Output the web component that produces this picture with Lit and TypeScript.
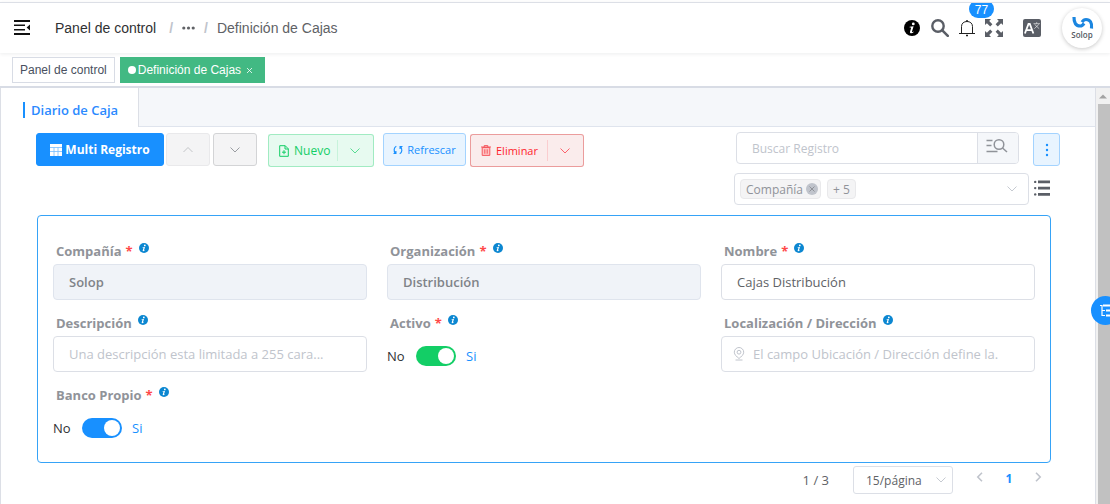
import { LitElement, html, css, svg, nothing } from "lit";
import { customElement, property } from "lit/decorators.js";

const chevronDown = html`<svg class="chevron" viewBox="0 0 12 12" width="12" height="12" aria-hidden="true"><path d="M1.5 3.5 6 8l4.500-4.500" fill="none" stroke="currentColor" stroke-width=".9"/></svg>`;
const chevronUp = html`<svg class="chevron" viewBox="0 0 12 12" width="12" height="12" aria-hidden="true"><path d="M1.5 8 6 3.500 10.500 8" fill="none" stroke="currentColor" stroke-width=".9"/></svg>`;

const infoGlyph = svg`<circle cx="8" cy="8" r="8" fill="currentColor"/><circle cx="9.3" cy="3.9" r="1.4" fill="#fff"/><path d="M5.6 6.8 9.6 6.2 8 11.4c-.2.7.2.9 1.3 0l.4.5c-1.6 1.8-4.2 1.7-3.7-.2l1.1-3.7c.1-.5-.3-.6-1.4-.6z" fill="#fff"/>`;

@customElement("nav-bar")
export class NavBar extends LitElement {
  static styles = css`
    :host { display: block; font-family: "Liberation Sans", Arial, sans-serif; font-size: 14px; }
    .bar { display: flex; align-items: center; height: 50px; padding: 0 8px 0 14px; border-top: 1px solid #dcdfe6; box-shadow: 0 1px 4px rgba(0, 21, 41, .08); overflow: clip; }
    button { border: 0; padding: 0; background: none; display: block; color: #5a5e66; cursor: pointer; }
    svg { display: block; }
    .crumbs { display: flex; align-items: center; gap: 9px; margin-left: 25px; flex: 1; color: #606266; white-space: nowrap; }
    .crumbs a { color: #303133; text-decoration: none; margin-right: 4px; }
    .sep { color: #c0c4cc; font-weight: 700; }
    .tools { display: flex; align-items: center; }
    .black { color: #000; }
    .search { margin-left: 11px; }
    .bell { margin-left: 10px; position: relative; color: #222; }
    .badge { position: absolute; left: 10px; top: -19px; box-sizing: border-box; width: 25px; height: 18px; border-radius: 9px; background: #1890ff; color: #fff; font-size: 12px; line-height: 20px; text-align: center; }
    .expand { margin-left: 10px; }
    .lang { margin-left: 20px; }
    .avatar { margin-left: 21px; width: 40px; height: 40px; border-radius: 50%; background: #fff; box-shadow: 0 1px 4px rgba(0, 0, 0, .22); }
  `;
  render() {
    return html`
      <header class="bar">
        <button aria-label="Menú"><svg width="16" height="16" viewBox="0 0 16 16" fill="#111"><path d="M0 0h16v2H0zM0 4.500h11v1.500H0zM0 9h11v1.500H0zM0 13h16v2H0zM16 4.500v6L12.600 7.500z"/></svg></button>
        <nav class="crumbs">
          <a href="#">Panel de control</a><span class="sep">/</span>
          <svg width="13" height="14" viewBox="0 0 13 14" fill="#606266"><circle cx="1.8" cy="7" r="1.6"/><circle cx="6.5" cy="7" r="1.6"/><circle cx="11.2" cy="7" r="1.6"/></svg>
          <span class="sep">/</span><span>Definición de Cajas</span>
        </nav>
        <div class="tools">
          <button class="black" aria-label="Información"><svg width="16" height="16" viewBox="0 0 16 16">${infoGlyph}</svg></button>
          <button class="search" aria-label="Buscar"><svg width="18" height="18" viewBox="0 0 18 18" fill="none" stroke="currentColor"><circle cx="7" cy="7" r="5.7" stroke-width="2.4"/><path d="m11.3 11.3 5.500 5.500" stroke-width="2.600" stroke-linecap="round"/></svg></button>
          <button class="bell" aria-label="Notificaciones"><svg width="16" height="18" viewBox="0 0 16 18" fill="none" stroke="currentColor" stroke-width="1"><path d="M0 14.500h16M2.500 14.500V7.500C2.500 4.200 5 2.500 8 2.500s5.500 1.700 5.500 5v7"/><path d="M8 1v1.500M7 16.500h2" stroke-width="1.500"/></svg><span class="badge">77</span></button>
          <button class="expand" aria-label="Pantalla completa"><svg width="18" height="18" viewBox="0 0 18 18" fill="currentColor"><path d="M0 0h6L4.200 1.900 7.400 5.200 5.200 7.400 1.900 4.200 0 6zM18 0h-6l1.800 1.900-3.200 3.300 2.200 2.200 3.300-3.200L18 6zM0 18h6l-1.800-1.900 3.200-3.300-2.200-2.200-3.300 3.200L0 12zM18 18h-6l1.800-1.900-3.200-3.300 2.200-2.200 3.300 3.200L18 12z"/></svg></button>
          <button class="lang" aria-label="Idioma"><svg width="18" height="18" viewBox="0 0 18 18"><rect width="18" height="18" rx="2" fill="currentColor"/><path d="M1.900 14.500 5.500 5h1.300l3.600 9.500M3.400 11.200h5.500" fill="none" stroke="#fff" stroke-width="1.800"/><path d="M10.500 4.700h6.500M13.700 3.200v1.500M11.600 5.400l4.600 4.300M15.900 5.400 11.300 9.700" fill="none" stroke="#fff" stroke-width=".6"/></svg></button>
          <button class="avatar" aria-label="Solop"><svg width="40" height="40" viewBox="0 0 40 40"><g fill="none" stroke="#1b86e0" stroke-width="3.200"><path d="M12 9c-.2 6 2 9 6.200 9 2 0 3-1.300 3.800-2.600"/><path d="M29.500 20.500c.8-6-1.500-9-5.500-9-2.200 0-3.200 1.300-4 2.600"/></g><text x="20" y="30" text-anchor="middle" font-family="Open Sans, sans-serif" font-size="8" font-weight="600" fill="#555a61">Solop</text></svg></button>
        </div>
      </header>`;
  }
}

@customElement("tags-view")
export class TagsView extends LitElement {
  static styles = css`
    :host { display: block; font: 12px "Liberation Sans", Arial, sans-serif; }
    .tags { display: flex; gap: 5px; padding: 4px 12px 3px; border-bottom: 2px solid #d8dce5; }
    .tag { display: flex; align-items: center; box-sizing: border-box; height: 26px; padding: 0 7px; border: 1px solid #d8dce5; color: #495060; background: #fff; text-decoration: none; }
    .tag.active { background: #42b983; border-color: #42b983; color: #fff; }
    .dot { width: 8px; height: 8px; border-radius: 50%; background: #fff; margin-right: 2px; }
    .close { width: 16px; height: 16px; display: grid; place-items: center; }
  `;
  render() {
    return html`<nav class="tags">
      <a class="tag" href="#">Panel de control</a>
      <a class="tag active" href="#"><span class="dot"></span>Definición de Cajas<span class="close"><svg width="5" height="5" viewBox="0 0 5 5"><path d="m0 0 5 5M5 0 0 5" stroke="#fff" stroke-width=".8"/></svg></span></a>
    </nav>`;
  }
}

@customElement("form-field")
export class FormField extends LitElement {
  @property() label = "";
  @property() value = "";
  @property() hint = "";
  @property() kind: "text" | "switch" | "location" = "text";
  @property() tone = "blue";
  @property({ type: Boolean }) required = false;
  @property({ type: Boolean }) locked = false;

  static styles = css`
    :host { display: block; min-width: 0; font: 13px "Open Sans", "Noto Sans", sans-serif; }
    .label { display: flex; height: 24px; line-height: 23px; padding-left: 3px; font-weight: 700; color: #909399; white-space: nowrap; }
    .star { color: #ff4949; margin-left: 4px; }
    .info { color: #0c87d1; margin: 3px 0 0 6px; }
    .box { display: flex; align-items: center; box-sizing: border-box; height: 36px; padding: 0 15px; border: 1px solid #dcdfe6; border-radius: 4px; background: #fff; color: #c0c4cc; }
    .box.locked { background: #f0f3f8; border-color: #dfe4ed; }
    .pin { margin: 0 8px 0 -4px; flex: none; }
    .box.location { padding-right: 30px; }
    input[type="text"] { flex: 1; min-width: 0; width: 0; border: 0; padding: 0; outline: 0; background: none; font: inherit; color: #606266; text-overflow: ellipsis; }
    .locked input[type="text"] { color: #808388; font-weight: 600; }
    .location input[type="text"] { text-overflow: clip; }
    input::placeholder { color: #c0c4cc; opacity: 1; }
    .switch { display: flex; align-items: center; gap: 10px; height: 40px; color: #303133; }
    .no { width: 19px; }
    .toggle { appearance: none; margin: 0; width: 40px; height: 20px; border-radius: 10px; background: #c0ccda; display: flex; align-items: center; padding: 0 2px; }
    .toggle::before { content: ""; width: 16px; height: 16px; border-radius: 50%; background: #fff; }
    .toggle:checked { justify-content: flex-end; background: #1890ff; }
    .toggle.green:checked { background: #13ce66; }
    .on { color: #1890ff; }
  `;

  private control() {
    if (this.kind === "switch") {
      return html`<div class="switch"><span class="no">No</span><input id="f" class="toggle ${this.tone}" type="checkbox" role="switch" checked><span class="on">Si</span></div>`;
    }
    return html`<div class="box ${this.locked ? "locked" : ""} ${this.kind}">
      ${this.kind === "location" ? html`<svg class="pin" width="12" height="14" viewBox="0 0 12 14" fill="none" stroke="currentColor"><path d="M6 11.500C3.500 9.500 1.300 7.600 1.300 5.200a4.700 4.700 0 0 1 9.400 0c0 2.400-2.200 4.300-4.700 6.300z"/><circle cx="6" cy="5.200" r="1.900"/><path d="M2.500 13h7"/></svg>` : nothing}
      <input id="f" type="text" .value=${this.value} placeholder=${this.hint} ?disabled=${this.locked}>
    </div>`;
  }

  render() {
    return html`<label class="label" for="f">${this.label}${this.required ? html`<span class="star">*</span>` : nothing}
      <svg class="info" width="10" height="10" viewBox="0 0 16 16">${infoGlyph}</svg></label>${this.control()}`;
  }
}

@customElement("record-toolbar")
export class RecordToolbar extends LitElement {
  static styles = css`
    :host { display: block; font: 12px "Open Sans", "Noto Sans", sans-serif; }
    svg { display: block; flex: none; }
    .row { display: flex; justify-content: space-between; align-items: flex-start; gap: 16px; }
    .actions { display: flex; padding-top: 1px; align-items: flex-start; }
    button { font: inherit; padding: 0; border: 1px solid; border-radius: 3px; box-sizing: border-box; display: flex; align-items: center; justify-content: center; height: 33px; white-space: nowrap; cursor: pointer; }
    .multi { width: 128px; gap: 3px; background: #1890ff; border-color: #1890ff; color: #fff; font-weight: 700; }
    .step { width: 44px; background: #f4f4f5; border-color: #d3d4d6; color: #909399; margin-left: 3px; }
    .step.off { border-color: #e9e9eb; color: #bcbec2; margin-left: 2px; }
    .split { display: flex; margin: 1px 0 0 11px; }
    .split button:first-child { border-right: 0; border-radius: 3px 0 0 3px; padding-left: 10px; gap: 5px; justify-content: flex-start; }
    .split button:last-child { border-left: 0; border-radius: 0 3px 3px 0; width: 36px; justify-content: flex-start; }
    .split button:last-child::before { content: ""; width: 1px; height: 21px; background: currentColor; opacity: .15; margin-right: 11px; }
    .split .chevron { opacity: .75; }
    .new button { background: #e7faf0; border-color: #a1ebc2; color: #13ce66; }
    .new button:first-child { width: 69px; }
    .new button:last-child { width: 37px; }
    .del { margin-left: 4px; }
    .del button { background: #faecec; border-color: #eb9c9c; color: #ff1f2d; }
    .del button:first-child { width: 77px; font-size: 11px; }
    .del button:last-child { width: 37px; }
    .refresh { width: 83px; gap: 4px; margin-left: 9px; font-size: 11px; background: #e8f4ff; border-color: #a3d3ff; color: #1890ff; }
    .side { display: grid; grid-template-columns: 295px 26px; column-gap: 5px; row-gap: 8px; align-items: start; flex: none; }
    .search { display: flex; margin: 0 10px 0 2px; height: 32px; box-sizing: border-box; border: 1px solid #dcdfe6; border-radius: 4px; }
    input { border: 0; outline: 0; padding: 0; background: none; font: inherit; min-width: 0; flex: 1; color: #606266; }
    .search input { padding-left: 15px; }
    .search input::placeholder { color: #c0c4cc; opacity: 1; }
    .search button { height: auto; width: 41px; border: 0; border-left: 1px solid #dcdfe6; border-radius: 0 3px 3px 0; background: #f5f7fa; color: #909399; padding: 0 2px 4px 0; }
    .more { width: 27px; margin: 1px 0 -1px -1px; background: #e8f4ff; border-color: #a3d3ff; color: #1890ff; }
    .pick { display: flex; align-items: center; gap: 6px; box-sizing: border-box; height: 32px; padding: 0 10px 0 5px; border: 1px solid #dcdfe6; border-radius: 4px; color: #c0c4cc; }
    .chip { display: flex; align-items: center; gap: 3px; box-sizing: border-box; height: 20px; padding: 0 5px; border: 1px solid #e9e9eb; border-radius: 4px; background: #f4f4f5; color: #909399; white-space: nowrap; }
    .chip.first { padding-right: 2px; }
    .chip button { width: 12px; height: 12px; border: 0; border-radius: 50%; background: #c0c4cc; color: #909399; }
    .list { width: 16px; border: 0; background: none; height: 30px; color: #5a5e66; }
  `;
  render() {
    return html`<div class="row">
      <div class="actions">
        <button class="multi"><svg width="12" height="12" viewBox="0 0 12 12"><path fill="#fff" d="M0 0h12v12H0z"/><path d="M0 3.500h12M0 7.500h12M4 3.500V12M8 3.500V12" stroke="#76bdff" stroke-width=".8"/></svg>Multi Registro</button>
        <button class="step off" aria-label="Anterior">${chevronUp}</button>
        <button class="step" aria-label="Siguiente">${chevronDown}</button>
        <div class="split new">
          <button><svg width="10" height="12" viewBox="0 0 10 12" fill="none" stroke="currentColor"><path d="M.7.700h5.500L9.300 3.800v7.500H.7zM6 .7V4h3.300M5 5.200v4M3 7.200h4" stroke-width="1"/></svg>Nuevo</button>
          <button aria-label="Más opciones de nuevo">${chevronDown}</button>
        </div>
        <button class="refresh"><svg width="10" height="10" viewBox="0 0 10 10" fill="none" stroke="currentColor" stroke-width="1.200"><path d="M3.300 1.200C.8 2.500.5 5.700 2.300 8.300M.5 8.500h2.400V6M6.700 8.800C9.200 7.500 9.500 4.300 7.700 1.700M9.500 1.500H7.100V4"/></svg>Refrescar</button>
        <div class="split del">
          <button><svg width="10" height="11" viewBox="0 0 10 11" fill="none" stroke="#f5585f" stroke-width="1"><path d="M1.200 2.500h7.600v7.900H1.200z" fill="#ffc4c4"/><path d="M0 2h10M3.200 2V.6h3.600V2M3.800 4.300v4.400M6.200 4.300v4.400"/></svg>Eliminar</button>
          <button aria-label="Más opciones de eliminar">${chevronDown}</button>
        </div>
      </div>
      <div class="side">
        <div class="search"><input type="search" aria-label="Buscar Registro" placeholder="Buscar Registro"><button aria-label="Búsqueda avanzada"><svg width="22" height="16" viewBox="0 0 22 16" fill="none" stroke="currentColor" stroke-width="1.500"><path d="M.5 2.500h6M.5 7.500h5M.5 13.500h11"/><circle cx="13" cy="6.500" r="4.800"/><path d="m16.500 10 4.500 4"/></svg></button></div>
        <button class="more" aria-label="Más acciones"><svg width="4" height="14" viewBox="0 0 4 14" fill="currentColor"><circle cx="2" cy="2" r="1.200"/><circle cx="2" cy="7" r="1.200"/><circle cx="2" cy="12" r="1.200"/></svg></button>
        <div class="pick"><span class="chip first">Compañía<button aria-label="Quitar Compañía"><svg width="6" height="6" viewBox="0 0 6 6"><path d="m.5.5 5 5m0-5-5 5" stroke="currentColor"/></svg></button></span><span class="chip">+ 5</span><input type="text" aria-label="Campos visibles">${chevronDown}</div>
        <button class="list" aria-label="Lista"><svg width="16" height="16" viewBox="0 0 16 16" fill="currentColor"><path d="M4 .500h12v2.800H4zM4 6.700h12v2.800H4zM4 13h12v2.800H4z"/><circle cx="1.200" cy="1.900" r="1.200"/><circle cx="1.200" cy="8.100" r="1.200"/><circle cx="1.200" cy="14.400" r="1.200"/></svg></button>
      </div>
    </div>`;
  }
}

@customElement("page-footer")
export class PageFooter extends LitElement {
  static styles = css`
    :host { display: block; font: 13px "Open Sans", "Noto Sans", sans-serif; color: #606266; }
    .pager { display: flex; justify-content: flex-end; align-items: flex-start; padding-right: 2px; }
    .count { line-height: 28px; margin-right: 24px; }
    .size { display: grid; align-items: center; margin-right: 16px; }
    .size > * { grid-area: 1 / 1; }
    .size svg { justify-self: end; margin-right: 6px; color: #c0c4cc; pointer-events: none; }
    select { appearance: none; box-sizing: border-box; width: 100px; height: 28px; border: 1px solid #dcdfe6; border-radius: 3px; padding: 0 20px 0 12px; font: inherit; font-size: 12px; color: inherit; background: #fff; }
    .nav { border: 0; background: none; padding: 0; width: 22px; height: 22px; display: grid; place-items: center; color: #c0c4cc; }
    .current { width: 36px; height: 24px; border: 0; background: none; padding: 0; font: 700 12px "Open Sans", sans-serif; color: #1890ff; }
  `;
  render() {
    const arrow = (d: string) => html`<svg width="8" height="10" viewBox="0 0 8 10"><path d=${d} fill="none" stroke="currentColor" stroke-width="1.600"/></svg>`;
    return html`<nav class="pager">
      <span class="count">1 / 3</span>
      <span class="size"><select aria-label="Registros por página"><option>15/página</option></select>${chevronDown}</span>
      <button class="nav" aria-label="Página anterior">${arrow("M6 .8 1.800 5 6 9.200")}</button>
      <button class="current">1</button>
      <button class="nav" aria-label="Página siguiente">${arrow("M2 .8 6.200 5 2 9.200")}</button>
    </nav>`;
  }
}

@customElement("app-root")
export class AppRoot extends LitElement {
  static styles = css`
    :host { display: flex; flex-direction: column; box-sizing: border-box; min-height: 100vh; padding-top: 2px; background: #fff; position: relative; overflow: hidden; }
    .body { display: flex; flex: 1; }
    .main { flex: 1; min-width: 0; border-left: 1px solid #dcdfe6; border-right: 1px solid #dcdfe6; }
    .tabs { display: flex; box-sizing: border-box; height: 39px; background: #f5f7fa; border-bottom: 1px solid #dfe4ed; }
    .tab { display: flex; align-items: center; box-sizing: border-box; height: 39px; border: 0; border-right: 1px solid #dcdfe6; background: #fff; padding: 4px 20px 0 22px; color: #2b8aff; font: 600 13px "Open Sans", sans-serif; }
    .tab::before { content: ""; width: 2px; height: 16px; background: #1890ff; margin-right: 6px; }
    .content { padding: 5px 44px 10px 35px; }
    .panel { display: grid; grid-template-columns: repeat(3, minmax(0, 1fr)); grid-auto-rows: minmax(64px, auto); gap: 8px 20px; margin: 10px 0 3px 1px; padding: 24px 15px 14px; border: 1px solid #36a3f7; border-radius: 4px; }
    .toolbar { margin-right: -9px; }
    .scroll { width: 14px; background: #f1f1f1; display: flex; flex-direction: column; align-items: center; }
    .scroll svg { margin: 6px 0 5px; flex: none; }
    .thumb { flex: 1; align-self: stretch; margin-left: 2px; background: #c1c1c1; }
    .float { position: absolute; right: -10px; top: 296px; width: 29px; height: 29px; border: 0; border-radius: 50%; background: #1890ff; padding: 0 0 0 8px; }
    .float svg { display: block; }
  `;
  render() {
    return html`
      <nav-bar></nav-bar>
      <tags-view></tags-view>
      <div class="body">
        <main class="main">
          <div class="tabs" role="tablist"><button class="tab" role="tab" aria-selected="true">Diario de Caja</button></div>
          <div class="content">
            <record-toolbar class="toolbar"></record-toolbar>
            <section class="panel">
              <form-field label="Compañía" value="Solop" required locked></form-field>
              <form-field label="Organización" value="Distribución" required locked></form-field>
              <form-field label="Nombre" value="Cajas Distribución" required></form-field>
              <form-field label="Descripción" hint="Una descripción esta limitada a 255 cara..."></form-field>
              <form-field label="Activo" kind="switch" tone="green" required></form-field>
              <form-field label="Localización / Dirección" kind="location" hint="El campo Ubicación / Dirección define la."></form-field>
              <form-field label="Banco Propio" kind="switch" required></form-field>
            </section>
            <page-footer></page-footer>
          </div>
        </main>
        <div class="scroll" aria-hidden="true"><svg width="8" height="5" viewBox="0 0 8 5"><path d="M0 4.500 4 .5l4 4z" fill="#a3a3a3"/></svg><div class="thumb"></div></div>
      </div>
      <button class="float" aria-label="Panel lateral"><svg width="15" height="13" viewBox="0 0 15 13" fill="none" stroke="#fff"><path d="M1 1.500h2v10h3M3 6.500h3" stroke-width="1.200"/><path d="M4 1.500h11M7 6.500h8M7 11.500h8" stroke-width="2.200"/></svg></button>`;
  }
}
